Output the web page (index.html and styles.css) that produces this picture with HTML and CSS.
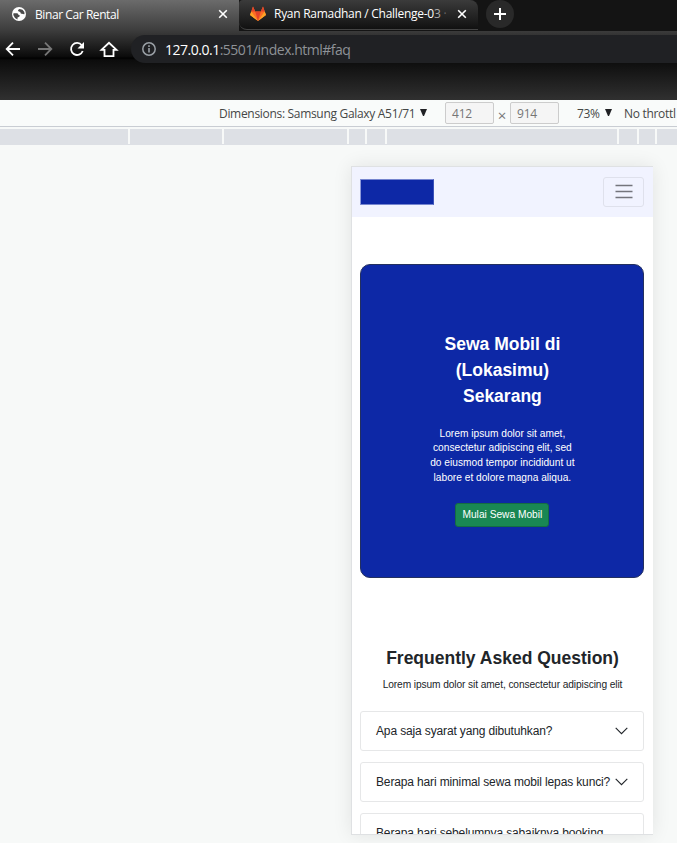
FILE: index.html
```
<!DOCTYPE html>
<html lang="id">
<head>
<meta charset="utf-8">
<title>Binar Car Rental</title>
<link rel="stylesheet" href="styles.css">
</head>
<body>
<header class="browser">
  <div class="tabs">
    <div class="tab active">
      <svg class="favicon" width="14" height="14" viewBox="0 0 14 14"><circle cx="7" cy="7" r="7" fill="#fff"/><path d="M1.500 6.200H4.800C6.500 6.200 6 8.300 7.500 8.300C8.500 8.500 7.500 10.300 5.500 10.600V12.500L3 11L1.300 8zM7.500 2C5.500 3 5.500 4.500 7.500 4.700C9 4.800 8 6.600 9.500 6.800C11 6.900 11.500 7.500 12.500 7L12.300 5L10.500 2.800z" fill="#4a4a4a"/></svg>
      <span class="tab-title t1">Binar Car Rental</span>
      <svg class="close" width="10" height="10" viewBox="0 0 10 10"><path d="M1.200 1.200l7.600 7.600M8.800 1.200l-7.600 7.600" stroke="#fff" stroke-width="1.600"/></svg>
    </div>
    <div class="tab">
      <svg class="favicon gitlab" width="16" height="15" viewBox="0 0 16 15"><path d="M0 9L3 0.500L5.200 5.500H10.800L13 0.500L16 9L8 15z" fill="#fc6d26"/><path d="M5.200 5.500H10.800L8 15z" fill="#e24329"/><path d="M3 .5L5.200 5.500H1.300zM13 .5L10.800 5.500H14.700z" fill="#e24329"/><path d="M0 9L1.300 5.500L8 15zM16 9L14.700 5.500L8 15z" fill="#fca326"/></svg>
      <span class="tab-title t2">Ryan Ramadhan / Challenge-0<span class="fade">3</span> <span class="fade2">·</span></span>
      <svg class="close" width="10" height="10" viewBox="0 0 10 10"><path d="M1.200 1.200l7.600 7.600M8.800 1.200l-7.600 7.600" stroke="#fff" stroke-width="1.600"/></svg>
    </div>
    <div class="new-tab"><svg width="12" height="12" viewBox="0 0 12 12"><path d="M6 0v12M0 6h12" stroke="#fff" stroke-width="2"/></svg></div>
  </div>
  <div class="toolbar">
    <svg class="nav-icons" width="131" height="28" viewBox="0 35 131 28" fill="none" stroke="#fff" stroke-width="1.800">
      <path d="M20 49H7.500M13 42.700L6.700 49L13 55.300"/>
      <path d="M38 49H50.500M45 42.700L51.300 49L45 55.300" stroke="#777"/>
      <path d="M81.800 45.300A6 6 0 1 0 82.700 51"/><path d="M84 42V48.500H77.500z" fill="#fff" stroke="none"/>
      <path d="M101.500 49.900H104.500V56.100H113.500V49.900H116.500L109 42.800z"/>
    </svg>
    <div class="address">
      <svg class="info" width="14" height="14" viewBox="0 0 14 14"><circle cx="7" cy="7" r="6.200" fill="none" stroke="#9aa0a6" stroke-width="1.500"/><path d="M7 6v4.500M7 3.300v1.600" stroke="#9aa0a6" stroke-width="1.600"/></svg>
      <span class="url"><b>127.0.0.1</b>:5501/index.html#faq</span>
    </div>
  </div>
</header>
<div class="device-bar">
  <span class="dims">Dimensions: Samsung Galaxy A51/71</span><i class="arrow a1"></i>
  <span class="num">412</span><span class="times">×</span><span class="num">914</span>
  <span class="pct">73%</span><i class="arrow a2"></i><span class="throttle">No throttl</span>
</div>
<div class="ruler"><i></i><i></i><i></i><i></i><i></i><i></i><i></i><i></i><i></i></div>
<main class="stage">
  <div class="phone">
    <nav class="navbar">
      <div class="brand"></div>
      <div class="toggler"><svg width="18" height="15" viewBox="0 0 18 15"><path d="M.5 1.500h17M.5 7.500h17M.5 13.500h17" stroke="#74757c" stroke-width="1.500"/></svg></div>
    </nav>
    <section class="hero">
      <h1>Sewa Mobil di<br>(Lokasimu)<br>Sekarang</h1>
      <p>Lorem ipsum dolor sit amet,<br>consectetur adipiscing elit, sed<br>do eiusmod tempor incididunt ut<br>labore et dolore magna aliqua.</p>
      <a class="btn">Mulai Sewa Mobil</a>
    </section>
    <section class="faq">
      <h2>Frequently Asked Question)</h2>
      <p>Lorem ipsum dolor sit amet, consectetur adipiscing elit</p>
      <div class="item"><span>Apa saja syarat yang dibutuhkan?</span><svg width="13" height="8" viewBox="0 0 13 8"><path d="M.7 .8L6.500 6.600L12.300 .8" fill="none" stroke="#212529" stroke-width="1.100"/></svg></div>
      <div class="item"><span>Berapa hari minimal sewa mobil lepas kunci?</span><svg width="13" height="8" viewBox="0 0 13 8"><path d="M.7 .8L6.500 6.600L12.300 .8" fill="none" stroke="#212529" stroke-width="1.100"/></svg></div>
      <div class="item"><span>Berapa hari sebelumnya sabaiknya booking</span></div>
    </section>
  </div>
</main>
</body>
</html>
```
FILE: styles.css
```
* { box-sizing: border-box; }
body { margin: 0; width: 677px; height: 843px; overflow: hidden; display: flex; flex-direction: column; background: #f7f9f8; font-family: "Open Sans", sans-serif; font-size: 12px; }
svg { flex: none; display: block; }
span { white-space: nowrap; }
.browser { height: 100px; flex: none; background: linear-gradient(#6b6b6b 0, #3d3d3d 30px, #0a0a0a 57px, #000 58px, #0c0c0c 60px, #303030 100px); }
.tabs { height: 31px; display: flex; background: linear-gradient(90deg, transparent 239px, #141414 239px); }
.tab { width: 239px; height: 30px; padding-left: 12px; display: flex; align-items: center; color: #fff; padding-bottom: 2px; background: linear-gradient(#3b3b3b, #111); border-radius: 4px 8px 0 8px; border-bottom: 1px solid #444; }
.tab.active { background: none; border: 0; border-radius: 0; }
.favicon { margin-right: 9px; }
.gitlab { margin-left: -1px; margin-right: 8px; }
.tab-title { overflow: hidden; }
.t1 { width: 183px; letter-spacing: -.42px; }
.t2 { width: 183px; letter-spacing: -.28px; }
.fade { color: #aaa; }
.fade2 { color: #666; }
.new-tab { width: 28px; height: 28px; margin-left: 8px; border-radius: 50%; background: #292929; display: grid; place-items: center; }
.toolbar { height: 32px; padding-top: 4px; display: flex; }
.address { flex: 1; height: 28px; background: #202124; border-radius: 14px 0 0 14px; padding-left: 11px; display: flex; align-items: center; }
.url { margin-left: 9px; font-size: 14px; letter-spacing: -.49px; color: #8e9297; }
.url b { font-weight: 400; color: #fff; }
.device-bar { height: 27px; flex: none; display: flex; align-items: center; padding-left: 219px; border-bottom: 1px solid #c9cdd3; color: #454746; background: #f9fbfa; overflow: hidden; }
.device-bar > * { flex: none; }
.dims { width: 201px; letter-spacing: -.31px; }
.arrow { border: 3.500px solid transparent; border-width: 7px 3.500px 0; border-top-color: #202124; width: 7px; margin-bottom: 2px; }
.a1 { margin-right: 18px; }
.num { width: 49px; height: 22px; border: 1px solid #ccc; border-radius: 2px; padding-left: 6px; line-height: 21px; background: #f5f5f5; color: #757575; letter-spacing: -.2px; }
.times { width: 16px; text-align: center; padding-top: 3px; color: #777; font-size: 15px; }
.pct { width: 28px; margin-left: 18px; letter-spacing: -.3px; }
.a2 { margin-right: 12px; }
.throttle { letter-spacing: -.3px; }
.ruler { height: 16px; flex: none; margin-top: 2px; display: grid; grid-template-columns: 128px 92px 123px 16px 18px 230px 18px 16px 20px; gap: 2px; background: linear-gradient(#f7f9f8 15px, #dde0e5 15px); }
.ruler i { background: #dde0e5; }
.stage { flex: 1; padding: 21px 0 0 351px; }
.phone { width: 302px; height: 669px; overflow: hidden; border: 1px solid #dfe1e3; border-right: 0; background: #fff; box-shadow: 0 0 18px rgba(0,0,0,.09); font-family: "Liberation Sans", sans-serif; color: #212529; }
.navbar { height: 50px; background: #f1f3ff; padding: 0 9px 1px 8px; display: flex; align-items: center; justify-content: space-between; }
.brand { width: 74px; height: 26px; background: #0d28a6; border: 1px solid #7585cf; border-left-color: #8e9bda; border-right-color: #3c52b8; }
.toggler { width: 41px; height: 30px; border: 1px solid #dfe1ec; border-radius: 3px; display: grid; place-items: center; }
.hero { margin: 47px 9px 0 8px; height: 314px; background: #0d28a6; border: 1px solid #23305f; border-radius: 10px; color: #fff; text-align: center; display: flex; flex-direction: column; align-items: center; padding: 66px 0 0 .8px; }
h1 { margin: 0; font-size: 17.500px; line-height: 26.200px; }
p { margin: 0; font-size: 10.200px; line-height: 14.800px; }
.hero p { margin-top: 17px; }
.btn { margin-top: 17px; width: 94px; height: 24px; border: 1px solid #146c43; background: #198754; border-radius: 3px; font-size: 10.200px; line-height: 22px; }
.faq { padding: 70px 9px 0 8px; text-align: center; }
h2 { margin: 0; padding-left: 1px; font-size: 17.500px; line-height: 21px; }
.faq p { margin: 9px 0 18px; padding-left: 1px; letter-spacing: -.1px; }
.item { height: 40px; margin-bottom: 11px; border: 1px solid #e6e7e8; border-radius: 3px; padding: 0 15px; display: flex; align-items: center; justify-content: space-between; letter-spacing: -.14px; }
```
